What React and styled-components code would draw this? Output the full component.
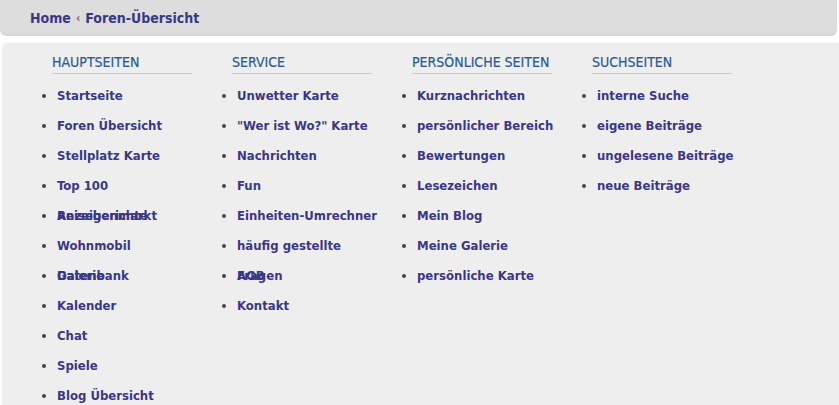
import styled, {createGlobalStyle} from 'styled-components'

const GlobalStyle = createGlobalStyle`
    body {
        margin: 0;
        background: #ffffff;
        font-family: "DejaVu Sans Condensed", "DejaVu Sans", Verdana, sans-serif;
    }
`

const Page = styled.div`
    width: 839px;
    height: 405px;
    overflow: hidden;
`

const Breadcrumb = styled.div`
    height: 36px;
    margin-right: 2px;
    padding-left: 30px;
    display: flex;
    align-items: center;
    gap: 5px;
    background: linear-gradient(#dddddd 0, #dddddd 31px, #d6d6d6 36px);
    border-radius: 0 0 6px 6px;
    font-size: 14px;
    font-weight: bold;
    color: #3b3785;
`

const Crumb = styled.a`
    color: inherit;
    text-decoration: none;
`

const Sep = styled.span`
    font-size: 12px;
    color: #6a6a9a;
`

const Panel = styled.div`
    margin: 6px 0 0 2px;
    padding: 11px 0 0 50px;
    height: 400px;
    display: flex;
    background: #eeeeee;
    border-top: 1px solid #f6f6f6;
    border-radius: 6px 0 0 0;
`

const Column = styled.div`
    width: 180px;
    flex: none;
`

const Heading = styled.h3`
    width: 140px;
    margin: 0;
    padding-bottom: 2px;
    border-bottom: 1px solid #c9c9c9;
    font-size: 14px;
    font-weight: normal;
    line-height: 17px;
    text-transform: uppercase;
    color: #2b5a96;
    -webkit-text-stroke: 0.2px #2b5a96;
`

const List = styled.ul`
    margin: 7px 0 0;
    padding-left: 5px;
    list-style: disc outside;
`

const Item = styled.li`
    width: 141px;
    height: 30px;
    line-height: 30px;
    font-size: 13px;
    font-weight: bold;
    color: #444444;

    & a {
        color: #3b3785;
        text-decoration: none;
    }
`

const columns = [
    {
        title: 'Hauptseiten',
        items: ['Startseite', 'Foren Übersicht', 'Stellplatz Karte', 'Top 100 Reiseberichte', 'Anzeigenmarkt', 'Wohnmobil Datenbank', 'Galerie', 'Kalender', 'Chat', 'Spiele', 'Blog Übersicht'],
    },
    {
        title: 'Service',
        items: ['Unwetter Karte', '"Wer ist Wo?" Karte', 'Nachrichten', 'Fun', 'Einheiten-Umrechner', 'häufig gestellte Fragen', 'AGB', 'Kontakt'],
    },
    {
        title: 'Persönliche Seiten',
        items: ['Kurznachrichten', 'persönlicher Bereich', 'Bewertungen', 'Lesezeichen', 'Mein Blog', 'Meine Galerie', 'persönliche Karte'],
    },
    {
        title: 'Suchseiten',
        items: ['interne Suche', 'eigene Beiträge', 'ungelesene Beiträge', 'neue Beiträge'],
    },
]

export default function App() {
    return (
        <Page>
            <GlobalStyle />
            <Breadcrumb>
                <Crumb href='#'>Home</Crumb>
                <Sep>‹</Sep>
                <Crumb href='#'>Foren-Übersicht</Crumb>
            </Breadcrumb>
            <Panel>
                {columns.map(col => (
                    <Column key={col.title}>
                        <Heading>{col.title}</Heading>
                        <List>
                            {col.items.map(item => (
                                <Item key={item}><a href='#'>{item}</a></Item>
                            ))}
                        </List>
                    </Column>
                ))}
            </Panel>
        </Page>
    )
}
